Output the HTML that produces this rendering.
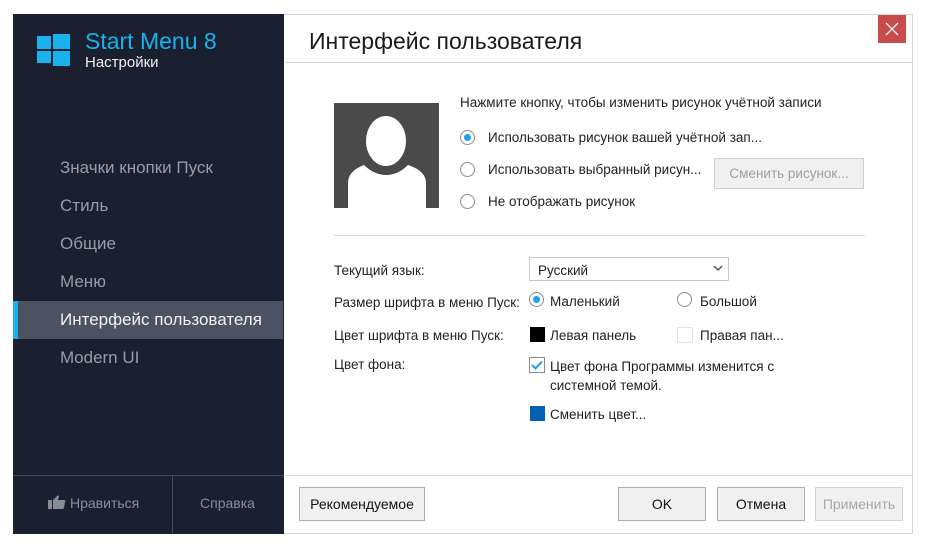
<!DOCTYPE html>
<html><head><meta charset="utf-8"><style>
*{margin:0;padding:0;box-sizing:border-box}
body{width:928px;height:559px;background:#fff;font-family:"Liberation Sans","DejaVu Sans",sans-serif;position:relative;overflow:hidden;color:#222}
.a{position:absolute;white-space:nowrap}
.win{position:absolute;left:13px;top:14px;width:900px;height:520px;border:1px solid #d8d8d8;background:#fff}
.side{position:absolute;left:13px;top:14px;width:271px;height:520px;background:#1b2030}
.nav{position:absolute;left:60px;font-size:17px;color:#9a9ca4}
.btn{position:absolute;border:1px solid #adadad;background:#f0f0f0;font-size:14px;text-align:center;color:#111}
.rad{position:absolute;width:15px;height:15px;border:1px solid #8a8a8a;border-radius:50%;background:#fff}
.rad.on::after{content:"";position:absolute;left:3px;top:3px;width:7px;height:7px;border-radius:50%;background:#1aa3e8}
.t{font-size:13.5px;color:#222}
</style></head><body>
<div class="win"></div>
<div class="side"></div>
<svg class="a" style="left:37px;top:33px" width="33" height="33" viewBox="0 0 33 33"><g fill="#1ab2ec"><rect x="0" y="3" width="14" height="13"/><rect x="16" y="1" width="17" height="15"/><rect x="0" y="18" width="14" height="12"/><rect x="16" y="18" width="17" height="15"/></g></svg>
<div class="a" style="left:85px;top:28px;font-size:23px;color:#1ab2ec">Start Menu 8</div>
<div class="a" style="left:85px;top:54px;font-size:15px;color:#f0f0f0">Настройки</div>
<div class="nav a" style="top:158px">Значки кнопки Пуск</div>
<div class="nav a" style="top:196px">Стиль</div>
<div class="nav a" style="top:234px">Общие</div>
<div class="nav a" style="top:272px">Меню</div>
<div class="a" style="left:13px;top:301px;width:270px;height:38px;background:#4c5262"></div>
<div class="a" style="left:13px;top:301px;width:5px;height:38px;background:#1ab2ec"></div>
<div class="nav a" style="top:310px;color:#f2f2f2">Интерфейс пользователя</div>
<div class="nav a" style="top:348px">Modern UI</div>
<div class="a" style="left:13px;top:475px;width:271px;height:1px;background:#444a58"></div>
<div class="a" style="left:172px;top:475px;width:1px;height:59px;background:#444a58"></div>
<svg class="a" style="left:48px;top:495px" width="18" height="14" viewBox="0 0 18 14"><g fill="#8a8d95"><rect x="0" y="5" width="4" height="9"/><path d="M5 5 L9 1 Q10 0 11 1 L10 5 L16 5 Q18 5 17 7 L16 13 Q15.5 14 14 14 L5 14Z"/></g></svg>
<div class="a" style="left:70px;top:495px;font-size:14px;color:#8a8d95">Нравиться</div>
<div class="a" style="left:200px;top:495px;font-size:14px;color:#8a8d95">Справка</div>
<div class="a" style="left:309px;top:28px;font-size:23px;color:#1a1a1a">Интерфейс пользователя</div>
<div class="a" style="left:285px;top:62px;width:627px;height:1px;background:#d8d8d8"></div>
<div class="a" style="left:878px;top:15px;width:28px;height:28px;background:#c94c4c"></div>
<svg class="a" style="left:885px;top:22px" width="14" height="14" viewBox="0 0 14 14"><path d="M1 1 L13 13 M13 1 L1 13" stroke="#fff" stroke-width="1.3"/></svg>
<svg class="a" style="left:334px;top:103px" width="105" height="105" viewBox="0 0 105 105"><rect width="105" height="105" fill="#4a4a4a"/><ellipse cx="52" cy="38" rx="20" ry="25" fill="#fff"/><path d="M14 105 L14 80 Q14 68 30 62 Q40 72 52 72 Q64 72 74 62 Q92 68 92 80 L92 105Z" fill="#fff"/></svg>
<div class="a t" style="left:460px;top:95px">Нажмите кнопку, чтобы изменить рисунок учётной записи</div>
<div class="rad on" style="left:460px;top:130px"></div>
<div class="a t" style="left:488px;top:130px">Использовать рисунок вашей учётной зап...</div>
<div class="rad" style="left:460px;top:162px"></div>
<div class="a t" style="left:488px;top:162px">Использовать выбранный рисун...</div>
<div class="btn" style="left:714px;top:158px;width:150px;height:31px;line-height:29px;color:#a0a0a0;border-color:#cfcfcf;font-size:13.5px">Сменить рисунок...</div>
<div class="rad" style="left:460px;top:194px"></div>
<div class="a t" style="left:488px;top:194px">Не отображать рисунок</div>
<div class="a" style="left:334px;top:235px;width:531px;height:1px;background:#d8d8d8"></div>
<div class="a t" style="left:334px;top:263px">Текущий язык:</div>
<div class="a" style="left:529px;top:257px;width:200px;height:24px;border:1px solid #c8c8c8"></div>
<div class="a t" style="left:538px;top:263px">Русский</div>
<svg class="a" style="left:713px;top:265px" width="10" height="7" viewBox="0 0 10 7"><path d="M1 1 L5 5 L9 1" fill="none" stroke="#555" stroke-width="1.5"/></svg>
<div class="a t" style="left:334px;top:295px">Размер шрифта в меню Пуск:</div>
<div class="rad on" style="left:529px;top:292px"></div>
<div class="a t" style="left:550px;top:294px">Маленький</div>
<div class="rad" style="left:677px;top:292px"></div>
<div class="a t" style="left:700px;top:294px">Большой</div>
<div class="a t" style="left:334px;top:328px">Цвет шрифта в меню Пуск:</div>
<div class="a" style="left:530px;top:327px;width:15px;height:15px;background:#000"></div>
<div class="a t" style="left:550px;top:328px">Левая панель</div>
<div class="a" style="left:677px;top:327px;width:16px;height:16px;border:1px solid #e4e4e4"></div>
<div class="a t" style="left:700px;top:328px">Правая пан...</div>
<div class="a t" style="left:334px;top:357px">Цвет фона:</div>
<div class="a" style="left:529px;top:357px;width:16px;height:16px;border:1px solid #8a8a8a"></div>
<svg class="a" style="left:531px;top:360px" width="12" height="10" viewBox="0 0 12 10"><path d="M1 5 L4.5 8.5 L11 1.5" fill="none" stroke="#1aa3e8" stroke-width="2"/></svg>
<div class="a t" style="left:550px;top:357px;line-height:19px">Цвет фона Программы изменится с<br>системной темой.</div>
<div class="a" style="left:530px;top:406px;width:15px;height:15px;background:#0062b1"></div>
<div class="a t" style="left:550px;top:407px">Сменить цвет...</div>
<div class="a" style="left:285px;top:475px;width:627px;height:1px;background:#d8d8d8"></div>
<div class="btn" style="left:299px;top:487px;width:126px;height:34px;line-height:32px">Рекомендуемое</div>
<div class="btn" style="left:618px;top:487px;width:88px;height:34px;line-height:32px">OK</div>
<div class="btn" style="left:717px;top:487px;width:88px;height:34px;line-height:32px">Отмена</div>
<div class="btn" style="left:815px;top:487px;width:88px;height:34px;line-height:32px;color:#a8a8a8;border-color:#d4d4d4">Применить</div>
</body></html>
